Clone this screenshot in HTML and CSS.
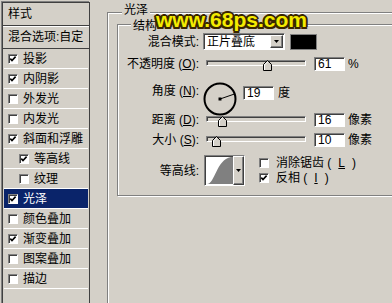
FILE: index.html
```html
<!DOCTYPE html>
<html lang="zh-CN">

<head>
    <meta charset="UTF-8">
    <meta name="viewport" content="width=device-width, initial-scale=1.0">
    <title>图层样式 - 光泽</title>
    <link rel="stylesheet" href="styles.css">
</head>

<body>
    <div class="styles">
        <div class="styles-head">样式</div>
        <div class="styles-blend">混合选项:自定</div>
        <ul class="fx-list">
            <li class="fx"><span class="cb"><svg class="tick" viewBox="0 0 8 8"><polyline points="1.3,3.6 3,5.5 6.6,1.6"/></svg></span>投影</li>
            <li class="fx"><span class="cb"><svg class="tick" viewBox="0 0 8 8"><polyline points="1.3,3.6 3,5.5 6.6,1.6"/></svg></span>内阴影</li>
            <li class="fx"><span class="cb"></span>外发光</li>
            <li class="fx"><span class="cb"></span>内发光</li>
            <li class="fx"><span class="cb"><svg class="tick" viewBox="0 0 8 8"><polyline points="1.3,3.6 3,5.5 6.6,1.6"/></svg></span>斜面和浮雕</li>
            <li class="fx sub"><span class="cb"><svg class="tick" viewBox="0 0 8 8"><polyline points="1.3,3.6 3,5.5 6.6,1.6"/></svg></span>等高线</li>
            <li class="fx sub"><span class="cb"></span>纹理</li>
            <li class="fx sel"><span class="cb"><svg class="tick" viewBox="0 0 8 8"><polyline points="1.3,3.6 3,5.5 6.6,1.6"/></svg></span>光泽</li>
            <li class="fx"><span class="cb"></span>颜色叠加</li>
            <li class="fx"><span class="cb"><svg class="tick" viewBox="0 0 8 8"><polyline points="1.3,3.6 3,5.5 6.6,1.6"/></svg></span>渐变叠加</li>
            <li class="fx"><span class="cb"></span>图案叠加</li>
            <li class="fx"><span class="cb"></span>描边</li>
        </ul>
    </div>

    <div class="panel">
        <fieldset class="group outer">
            <legend>光泽</legend>
            <fieldset class="group inner">
                <legend>结构</legend>

                <div class="field mode">
                    <span class="field-label">混合模式:</span>
                    <div class="select">
                        <span class="select-text">正片叠底</span>
                        <span class="drop"><svg class="arrow" viewBox="0 0 5 3"><polygon points="0,0 5,0 2.5,3"/></svg></span>
                    </div>
                    <div class="swatch"></div>
                </div>

                <div class="field opacity">
                    <span class="field-label">不透明度 (<u>O</u>):</span>
                    <div class="slider">
                        <div class="slider-track"></div>
                        <svg class="slider-thumb" style="left: 57px;" viewBox="0 0 9 11"><polygon points="4.5,0.5 8.5,4.5 8.5,10.5 0.5,10.5 0.5,4.5"/><polyline points="1.5,10 1.5,4.9 4.5,1.9"/></svg>
                    </div>
                    <div class="num">61</div>
                    <span class="unit">%</span>
                </div>

                <div class="field angle">
                    <span class="field-label">角度 (<u>N</u>):</span>
                    <svg class="dial" viewBox="0 0 34 34">
                        <circle cx="17" cy="17" r="15.5"/>
                        <line x1="17" y1="17" x2="31.2" y2="12.1"/>
                        <rect x="15.5" y="15.5" width="3" height="3"/>
                    </svg>
                    <div class="num">19</div>
                    <span class="unit">度</span>
                </div>

                <div class="field distance">
                    <span class="field-label">距离 (<u>D</u>):</span>
                    <div class="slider">
                        <div class="slider-track"></div>
                        <svg class="slider-thumb" style="left: 12px;" viewBox="0 0 9 11"><polygon points="4.5,0.5 8.5,4.5 8.5,10.5 0.5,10.5 0.5,4.5"/><polyline points="1.5,10 1.5,4.9 4.5,1.9"/></svg>
                    </div>
                    <div class="num">16</div>
                    <span class="unit">像素</span>
                </div>

                <div class="field size">
                    <span class="field-label">大小 (<u>S</u>):</span>
                    <div class="slider">
                        <div class="slider-track"></div>
                        <svg class="slider-thumb" style="left: 6px;" viewBox="0 0 9 11"><polygon points="4.5,0.5 8.5,4.5 8.5,10.5 0.5,10.5 0.5,4.5"/><polyline points="1.5,10 1.5,4.9 4.5,1.9"/></svg>
                    </div>
                    <div class="num">10</div>
                    <span class="unit">像素</span>
                </div>

                <div class="field contour">
                    <span class="field-label">等高线:</span>
                    <div class="contour-box">
                        <svg class="contour-curve" viewBox="0 0 27 27" preserveAspectRatio="none">
                            <path d="M1 27 C 9 27, 10 3, 25 0 L27 0 L27 27 Z"/>
                        </svg>
                        <span class="drop tall"><svg class="arrow" viewBox="0 0 5 3"><polygon points="0,0 5,0 2.5,3"/></svg></span>
                    </div>
                    <div class="checks">
                        <div class="check"><span class="cb"></span>消除锯齿 (<u>L</u>)</div>
                        <div class="check"><span class="cb"><svg class="tick" viewBox="0 0 8 8"><polyline points="1.3,3.6 3,5.5 6.6,1.6"/></svg></span>反相 (<u>I</u>)</div>
                    </div>
                </div>
            </fieldset>
        </fieldset>
    </div>

    <div class="watermark">www.68ps.com</div>
</body>

</html>
```

FILE: styles.css
```css
body {
    margin: 0;
    width: 392px;
    height: 303px;
    overflow: hidden;
    position: relative;
    display: flex;
    align-items: flex-start;
    background-color: #d4d0c8;
    color: #000;
    font-family: "Liberation Sans", "Noto Sans CJK SC", sans-serif;
    font-size: 12px;
    line-height: 14px;
}

/* left list of effects */
.styles {
    flex: none;
    margin: 2px 0 0 2px;
    width: 86px;
    height: 320px;
    border: 1px solid #404040;
    border-bottom: none;
    box-shadow: -1px -1px 0 #808080;
}

.styles-head,
.styles-blend {
    height: 22px;
    line-height: 22px;
    padding-left: 5px;
    border-bottom: 1px solid #404040;
    white-space: nowrap;
}

.styles-blend {
    box-shadow: inset 0 1px 0 #fff;
}

.fx-list {
    list-style: none;
    margin: 0;
    padding: 0;
}

.fx {
    display: flex;
    align-items: center;
    gap: 5px;
    height: 19px;
    margin: 0 1px;
    padding-left: 4px;
    border-bottom: 1px solid #fff;
    white-space: nowrap;
}

.fx.sub {
    padding-left: 15px;
}

.fx.sel {
    background-color: #0a246a;
    color: #fff;
}

.cb {
    flex: none;
    display: flex;
    width: 8px;
    height: 8px;
    border: 1px solid;
    border-color: #808080 #fff #fff #808080;
    box-shadow: inset 1px 1px 0 #404040;
    background-color: #fff;
}

.tick {
    width: 8px;
    height: 8px;
}

.tick polyline {
    fill: none;
    stroke: #000;
    stroke-width: 1.6;
}

/* right panel */
.panel {
    flex: none;
    margin-left: 17px;
}

.group {
    margin: 0;
    min-width: 0;
    border: 1px solid #808080;
    box-shadow: inset 1px 1px 0 #fff, 1px 1px 0 #fff;
}

.group > legend {
    padding: 0 2px;
    background-color: #d4d0c8;
    line-height: 14px;
}

.outer {
    margin-top: 3px;
    width: 300px;
    height: 320px;
    padding: 0 0 0 9px;
}

.outer > legend {
    margin-left: 5px;
    padding-bottom: 4px;
}

.inner {
    margin-top: -6px;
    width: 290px;
    padding: 0 0 9px 0;
}

.inner > legend {
    margin-left: 13px;
    padding-top: 4px;
}

.field {
    display: flex;
    align-items: center;
    height: 14px;
    white-space: nowrap;
}

.field-label {
    flex: none;
    width: 81px;
    text-align: right;
}

.field.mode {
    height: 17px;
}

.field.opacity {
    margin-top: 7px;
}

.field.angle {
    margin-top: 11px;
    height: 33px;
    align-items: flex-start;
}

.field.angle .field-label {
    padding-top: 2px;
}

.field.distance {
    margin-top: -2px;
}

.field.size {
    margin-top: 6px;
}

.field.contour {
    margin-top: 8px;
    height: 31px;
}

/* controls */
.select {
    flex: none;
    display: flex;
    align-items: center;
    box-sizing: border-box;
    margin-left: 4px;
    width: 82px;
    height: 17px;
    padding-left: 3px;
    border: 1px solid;
    border-color: #808080 #fff #fff #808080;
    box-shadow: inset 1px 1px 0 #404040;
    background-color: #fff;
}

.select-text {
    flex: 1;
}

.drop {
    flex: none;
    display: flex;
    align-items: center;
    justify-content: center;
    box-sizing: border-box;
    width: 13px;
    height: 13px;
    margin-right: 1px;
    border: 1px solid;
    border-color: #fff #404040 #404040 #fff;
    box-shadow: inset -1px -1px 0 #808080;
    background-color: #d4d0c8;
}

.drop.tall {
    width: 11px;
    height: 100%;
    margin: 0;
}

.arrow {
    width: 5px;
    height: 3px;
}

.swatch {
    flex: none;
    box-sizing: border-box;
    margin-left: 5px;
    width: 27px;
    height: 16px;
    border: 1px solid #808080;
    background-color: #000;
}

.slider {
    flex: none;
    position: relative;
    margin-left: 7px;
    width: 100px;
    height: 14px;
}

.slider-track {
    box-sizing: border-box;
    margin-top: 3px;
    height: 6px;
    border: 1px solid;
    border-color: #808080 #fff #fff #808080;
    box-shadow: inset 1px 1px 0 #404040;
    background-color: #d4d0c8;
}

.slider-thumb {
    position: absolute;
    top: 3px;
    width: 9px;
    height: 11px;
}

.slider-thumb polygon {
    fill: #d4d0c8;
    stroke: #000;
    stroke-width: 1;
}

.slider-thumb polyline {
    fill: none;
    stroke: #fff;
    stroke-width: 1;
}

.num {
    flex: none;
    box-sizing: border-box;
    margin-left: 8px;
    width: 31px;
    height: 14px;
    padding-left: 3px;
    border: 1px solid;
    border-color: #808080 #fff #fff #808080;
    box-shadow: inset 1px 1px 0 #404040;
    background-color: #fff;
    font-size: 12px;
    line-height: 12px;
}

.unit {
    margin-left: 3px;
}

.dial {
    flex: none;
    margin-left: 4px;
    width: 34px;
    height: 34px;
}

.dial circle {
    fill: none;
    stroke: #000;
    stroke-width: 2;
}

.dial line {
    stroke: #000;
    stroke-width: 1;
}

.field.angle .num {
    margin: 4px 0 0 6px;
}

.field.angle .unit {
    margin: 4px 0 0 4px;
}

.contour-box {
    flex: none;
    display: flex;
    box-sizing: border-box;
    margin-left: 5px;
    width: 41px;
    height: 31px;
    border: 1px solid;
    border-color: #808080 #fff #fff #808080;
    box-shadow: inset 1px 1px 0 #404040;
    background-color: #fff;
}

.contour-curve {
    flex: 1;
    height: 27px;
    margin: 1px 0 0 1px;
}

.contour-curve path {
    fill: #808080;
}

.checks {
    align-self: flex-start;
    display: flex;
    flex-direction: column;
    margin-left: 14px;
}

.check {
    display: flex;
    align-items: center;
    gap: 7px;
    height: 15px;
}

/* site watermark over the dialog */
.watermark {
    position: absolute;
    left: 156px;
    top: 8px;
    font-family: "Liberation Sans", sans-serif;
    font-weight: bold;
    font-size: 21px;
    line-height: 24px;
    color: #f4ec00;
    text-shadow:
        2px 0 0 #3a2600, -2px 0 0 #3a2600, 0 2px 0 #3a2600, 0 -2px 0 #3a2600,
        1.5px 1.5px 0 #3a2600, -1.5px 1.5px 0 #3a2600, 1.5px -1.5px 0 #3a2600, -1.5px -1.5px 0 #3a2600;
}
```
